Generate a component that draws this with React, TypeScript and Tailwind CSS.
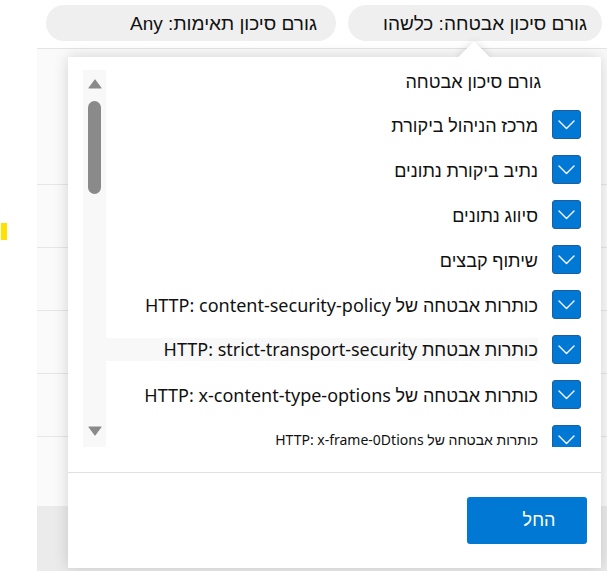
import React from "react";

function Check() {
  return (
    <div className="w-[29px] h-[29px] shrink-0 rounded-[3px] bg-[#0078d4] border border-[#1d5f9c] flex items-center justify-center">
      <svg width="17" height="10" viewBox="0 0 17 10" fill="none">
        <polyline points="1,1 8.5,8.5 16,1" stroke="white" strokeWidth="1.4" strokeLinecap="round" strokeLinejoin="round" />
      </svg>
    </div>
  );
}

const rows: { text: string; band?: boolean; small?: boolean }[] = [
  { text: "מרכז הניהול ביקורת" },
  { text: "נתיב ביקורת נתונים" },
  { text: "סיווג נתונים" },
  { text: "שיתוף קבצים" },
  { text: "כותרות אבטחה של HTTP: content-security-policy" },
  { text: "כותרות אבטחת HTTP: strict-transport-security", band: true },
  { text: "כותרות אבטחה של HTTP: x-content-type-options" },
  { text: "כותרות אבטחה של HTTP: x-frame-0Dtions", small: true },
];

export default function App() {
  return (
    <div className="relative w-[607px] h-[571px] overflow-hidden bg-white text-[#111] font-[Liberation_Sans,DejaVu_Sans,sans-serif]">
      <div className="flex h-full">
        {/* left white strip */}
        <div className="w-[37px] shrink-0 flex flex-col bg-white">
          <div className="mt-[223px] ml-[1px] w-[6px] h-[17px] bg-[#ffe100]" />
        </div>
        {/* page area */}
        <div className="flex-1 flex flex-col">
          <div className="h-[49px] shrink-0 border-b border-[#e4e4e4] bg-white flex justify-end items-start gap-[12px] pr-[5px] pt-[5px]" dir="ltr">
            <div dir="rtl" className="w-[290px] h-[36px] rounded-full bg-[#efefef] flex items-center pr-[19px] text-[19px] leading-none">
              גורם סיכון תאימות: Any
            </div>
            <div dir="rtl" className="w-[254px] h-[36px] rounded-full bg-[#efefef] flex items-center pr-[15px] text-[19px] leading-none">
              גורם סיכון אבטחה: כלשהו
            </div>
          </div>
          <div className="flex-1 flex flex-col bg-[#fafafa]">
            <div className="h-[136px] shrink-0 border-b border-[#e6e6e6]" />
            <div className="h-[63px] shrink-0 border-b border-[#e6e6e6]" />
            <div className="h-[63px] shrink-0 border-b border-[#e6e6e6]" />
            <div className="h-[63px] shrink-0 border-b border-[#e6e6e6]" />
            <div className="h-[63px] shrink-0 border-b border-[#e6e6e6]" />
            <div className="h-[69px] shrink-0" />
            <div className="flex-1 bg-[#ebebeb]" />
          </div>
        </div>
      </div>

      {/* beak shadow layer */}
      <div className="absolute left-[463px] top-[46px] w-[22px] h-[22px] rotate-45 bg-white shadow-[0_0_8px_rgba(0,0,0,0.14)]" />

      {/* popup */}
      <div className="absolute left-[68px] top-[57px] w-[533px] h-[511px] bg-white shadow-[0_0_14px_rgba(0,0,0,0.16)] flex flex-col" dir="rtl">
        <div className="h-[390px] shrink-0 flex">
          <div className="flex-1 overflow-hidden pr-[20px] flex flex-col">
            <div className="h-[45px] shrink-0 pt-[13px] pr-[40px] text-[18px] leading-[24px]">גורם סיכון אבטחה</div>
            {rows.map((r, i) => (
              <div key={i} className="h-[45px] shrink-0 flex items-center gap-[14px]">
                <Check />
                <div
                  className={
                    "font-[Noto_Sans,Liberation_Sans,DejaVu_Sans,sans-serif] " +
                    (r.small ? "text-[14px] leading-[24px] " : "text-[18px] ") +
                    (r.band ? "flex-1 bg-[#f8f8f8] leading-[23px] " : "leading-[24px] ") +
                    "whitespace-nowrap"
                  }
                >
                  {r.text}
                </div>
              </div>
            ))}
          </div>
          {/* scrollbar */}
          <div className="shrink-0 w-[23px] ml-[15px] mt-[13px] h-[377px] bg-[#f8f8f8] flex flex-col items-center" dir="ltr">
            <svg className="mt-[9px]" width="14" height="10" viewBox="0 0 14 10">
              <path d="M7 1 L13 9 L1 9 Z" fill="#8a8a8a" stroke="#8a8a8a" strokeWidth="1.2" strokeLinejoin="round" />
            </svg>
            <div className="mt-[12px] w-[13px] h-[93px] rounded-full bg-[#8a8a8a]" />
            <div className="flex-1" />
            <svg className="mb-[11px]" width="14" height="10" viewBox="0 0 14 10">
              <path d="M1 1 L13 1 L7 9 Z" fill="#8a8a8a" stroke="#8a8a8a" strokeWidth="1.2" strokeLinejoin="round" />
            </svg>
          </div>
        </div>
        <div className="h-[25px] shrink-0" />
        <div className="flex-1 border-t border-[#e1e1e1] pt-[24px] pr-[14px] flex items-start">
          <button className="w-[120px] h-[47px] rounded-[3px] bg-[#0078d4] text-white text-[18px] flex items-center justify-center pl-[24px]">
            החל
          </button>
        </div>
      </div>

      {/* beak top layer (no shadow) */}
      <div className="absolute left-[463px] top-[46px] w-[22px] h-[22px] rotate-45 bg-white" />
    </div>
  );
}
